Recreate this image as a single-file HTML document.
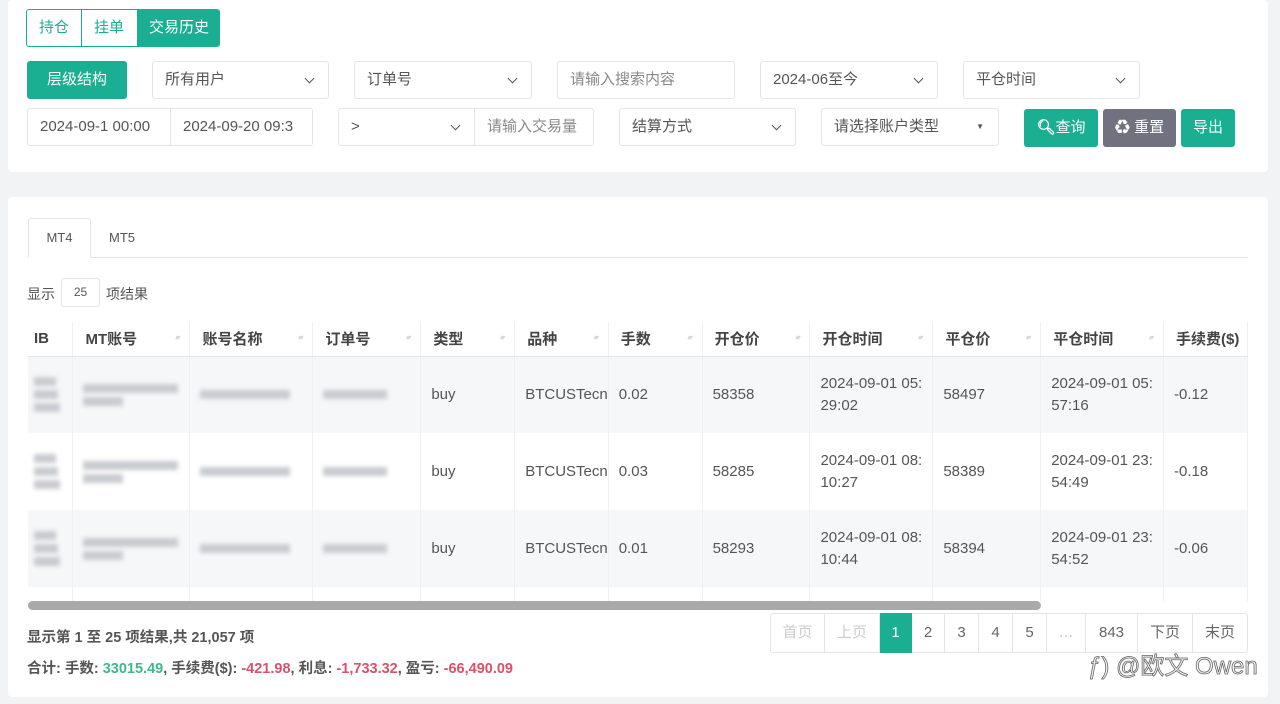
<!DOCTYPE html>
<html><head><meta charset="utf-8"><style>
*{box-sizing:border-box;margin:0;padding:0}
body{width:1280px;height:704px;background:#f2f3f5;font-family:"Liberation Sans","Noto Sans CJK SC",sans-serif;font-size:14px;color:#555;position:relative;overflow:hidden}
.card{position:absolute;left:8px;width:1260px;background:#fff;border-radius:4px}
.a{position:absolute}
.in{position:absolute;height:38px;border:1px solid #e3e5e8;border-radius:3px;background:#fff;padding:0 12px;line-height:36px;color:#555;font-size:15px}
.ph{color:#888}
.chev{position:absolute;right:15px;top:13px;width:7px;height:7px;border-right:1.5px solid #555;border-bottom:1.5px solid #555;transform:rotate(45deg)}
.btn{position:absolute;height:38px;border-radius:3px;color:#fff;line-height:38px;text-align:center;font-size:15px}
.g{background:#1aae93}
table{border-collapse:collapse;position:absolute;left:28px;top:322px;table-layout:fixed}
th{height:34px;text-align:left;font-weight:bold;color:#444;padding-left:12px;border-right:1px solid #eef0f2;border-bottom:1px solid #e3e5e8;position:relative;font-size:15px}
th.s::after{content:"▴▾";position:absolute;right:10px;top:12px;font-size:6px;color:#d5d5d5;letter-spacing:-1px}
td{height:77px;padding-left:10px;border-right:1px solid #eef0f2;color:#555;font-size:15px;line-height:22px;vertical-align:middle}
tr.o td{background:#f6f7f9}
.bl{display:block;background:#c8cbd0;filter:blur(2px);height:9px;margin:4px 0}
.pg{position:absolute;top:613px;height:40px;border:1px solid #e3e5e8;border-left:none;text-align:center;line-height:38px;color:#666;font-size:15px}
</style></head><body>
<div class="card" style="top:0;height:172px"></div>
<div class="a" style="left:26px;top:9px;width:194px;height:38px;border:1px solid #1aae93;border-radius:3px;overflow:hidden;font-size:15px">
<span class="a" style="left:0;width:54px;height:36px;line-height:36px;text-align:center;color:#1aae93">持仓</span>
<span class="a" style="left:54px;width:55px;height:36px;line-height:36px;text-align:center;color:#1aae93;border-left:1px solid #1aae93">挂单</span>
<span class="a" style="left:110px;width:84px;height:36px;line-height:36px;text-align:center;color:#fff;background:#1aae93">交易历史</span></div>
<div class="btn g" style="left:27px;top:61px;width:100px">层级结构</div>
<div class="in" style="left:152px;top:61px;width:177px">所有用户<i class="chev"></i></div>
<div class="in" style="left:354px;top:61px;width:178px">订单号<i class="chev"></i></div>
<div class="in ph" style="left:557px;top:61px;width:178px">请输入搜索内容</div>
<div class="in" style="left:760px;top:61px;width:178px">2024-06至今<i class="chev"></i></div>
<div class="in" style="left:963px;top:61px;width:177px">平仓时间<i class="chev"></i></div>
<div class="in" style="left:27px;top:108px;width:144px;border-radius:3px 0 0 3px">2024-09-1 00:00</div>
<div class="in" style="left:170px;top:108px;width:143px;border-radius:0 3px 3px 0;overflow:hidden;white-space:nowrap">2024-09-20 09:3</div>
<div class="in" style="left:338px;top:108px;width:137px;border-radius:3px 0 0 3px">&gt;<i class="chev"></i></div>
<div class="in ph" style="left:474px;top:108px;width:120px;border-radius:0 3px 3px 0">请输入交易量</div>
<div class="in" style="left:619px;top:108px;width:177px">结算方式<i class="chev"></i></div>
<div class="in" style="left:821px;top:108px;width:178px">请选择账户类型<span class="a" style="right:14px;top:0;font-size:8px;color:#555">▼</span></div>
<div class="btn g" style="left:1024px;top:109px;width:74px"><b style="font-size:15px">&#x1F50D;&#xFE0E;</b>查询</div>
<div class="btn" style="left:1103px;top:109px;width:73px;background:#70737f">♻ 重置</div>
<div class="btn g" style="left:1181px;top:109px;width:54px">导出</div>

<div class="card" style="top:197px;height:500px"></div>
<div class="a" style="left:28px;top:257px;width:1220px;border-top:1px solid #e3e5e8"></div>
<div class="a" style="left:28px;top:218px;width:63px;height:40px;border:1px solid #e3e5e8;border-bottom:1px solid #fff;border-radius:3px 3px 0 0;background:#fff;text-align:center;line-height:38px;font-size:13px;color:#555">MT4</div>
<div class="a" style="left:109px;top:230px;font-size:13px;color:#555">MT5</div>
<div class="a" style="left:27px;top:284px">显示</div>
<div class="a" style="left:61px;top:278px;width:39px;height:29px;border:1px solid #e3e5e8;border-radius:3px;text-align:center;line-height:27px;font-size:12px">25</div>
<div class="a" style="left:106px;top:284px">项结果</div>
<div class="a" style="left:28px;top:322px;width:1220px;height:280px;overflow:hidden">
<table style="left:0;top:0">
<colgroup><col width="45"><col width="117"><col width="123"><col width="108"><col width="94"><col width="93"><col width="94"><col width="108"><col width="123"><col width="108"><col width="123"><col width="84"></colgroup>
<tr><th style="padding-left:6px">IB</th><th class="s">MT账号</th><th class="s">账号名称</th><th class="s">订单号</th><th class="s">类型</th><th class="s">品种</th><th class="s">手数</th><th class="s">开仓价</th><th class="s">开仓时间</th><th class="s">平仓价</th><th class="s" style="">平仓时间</th><th>手续费($)</th></tr>
<tr class="o"><td style="padding-left:6px"><i class="bl" style="width:22px"></i><i class="bl" style="width:24px"></i><i class="bl" style="width:26px"></i></td><td><i class="bl" style="width:95px"></i><i class="bl" style="width:40px"></i></td><td><i class="bl" style="width:90px"></i></td><td><i class="bl" style="width:64px"></i></td><td>buy</td><td>BTCUSTecn</td><td>0.02</td><td>58358</td><td>2024-09-01 05:<br>29:02</td><td>58497</td><td>2024-09-01 05:<br>57:16</td><td>-0.12</td></tr>
<tr><td style="padding-left:6px"><i class="bl" style="width:22px"></i><i class="bl" style="width:24px"></i><i class="bl" style="width:26px"></i></td><td><i class="bl" style="width:95px"></i><i class="bl" style="width:40px"></i></td><td><i class="bl" style="width:90px"></i></td><td><i class="bl" style="width:64px"></i></td><td>buy</td><td>BTCUSTecn</td><td>0.03</td><td>58285</td><td>2024-09-01 08:<br>10:27</td><td>58389</td><td>2024-09-01 23:<br>54:49</td><td>-0.18</td></tr>
<tr class="o"><td style="padding-left:6px"><i class="bl" style="width:22px"></i><i class="bl" style="width:24px"></i><i class="bl" style="width:26px"></i></td><td><i class="bl" style="width:95px"></i><i class="bl" style="width:40px"></i></td><td><i class="bl" style="width:90px"></i></td><td><i class="bl" style="width:64px"></i></td><td>buy</td><td>BTCUSTecn</td><td>0.01</td><td>58293</td><td>2024-09-01 08:<br>10:44</td><td>58394</td><td>2024-09-01 23:<br>54:52</td><td>-0.06</td></tr>
<tr><td></td><td></td><td></td><td></td><td></td><td></td><td></td><td></td><td></td><td></td><td></td><td></td></tr>
</table></div>
<div class="a" style="left:28px;top:601px;width:1013px;height:9px;border-radius:5px;background:#a9a9a9"></div>
<div class="a" style="left:27px;top:626px;font-weight:bold;color:#555;font-size:14.5px">显示第 1 至 25 项结果,共 21,057 项</div>
<div class="a" style="left:27px;top:657px;font-weight:bold;color:#555;font-size:14.5px">合计: 手数: <span style="color:#3fb98a">33015.49</span>, 手续费($): <span style="color:#d9526a">-421.98</span>, 利息: <span style="color:#d9526a">-1,733.32</span>, 盈亏: <span style="color:#d9526a">-66,490.09</span></div>
<div class="pg" style="left:770px;width:55px;border-left:1px solid #e3e5e8;border-radius:3px 0 0 3px;color:#ccc">首页</div>
<div class="pg" style="left:825px;width:55px;color:#ccc">上页</div>
<div class="pg" style="left:880px;width:32px;background:#1aae93;border-color:#1aae93;color:#fff">1</div>
<div class="pg" style="left:912px;width:33px">2</div>
<div class="pg" style="left:945px;width:34px">3</div>
<div class="pg" style="left:979px;width:34px">4</div>
<div class="pg" style="left:1013px;width:34px">5</div>
<div class="pg" style="left:1047px;width:39px;color:#bbb">…</div>
<div class="pg" style="left:1086px;width:52px">843</div>
<div class="pg" style="left:1138px;width:55px">下页</div>
<div class="pg" style="left:1193px;width:55px;border-radius:0 3px 3px 0">末页</div>
<div class="a" style="left:1088px;top:646px;font-size:24px;color:#f4f4f4;-webkit-text-stroke:0.8px #666;font-family:'Liberation Sans','Noto Sans CJK SC',sans-serif">ƒ) @欧文 Owen</div>
</body></html>
